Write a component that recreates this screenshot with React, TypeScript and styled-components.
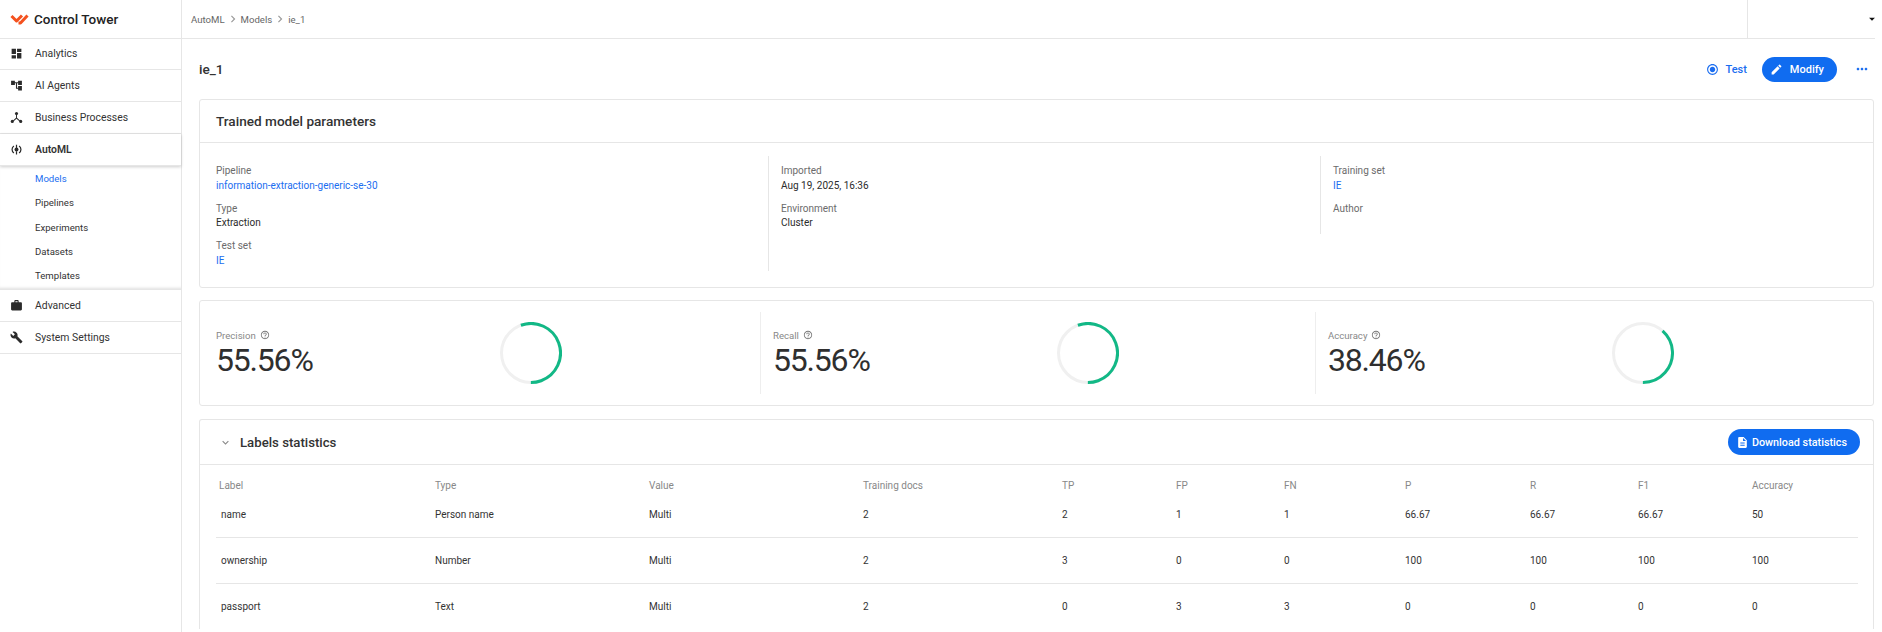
import React from 'react';
import styled, { createGlobalStyle } from 'styled-components';
import {
	MdDashboard,
	MdAccountTree,
	MdWork,
	MdBuild,
	MdEdit,
	MdDescription,
	MdMoreHoriz,
	MdRadioButtonChecked,
	MdHelpOutline,
	MdExpandMore,
	MdArrowDropDown,
	MdChevronRight,
} from 'react-icons/md';

const GlobalStyle = createGlobalStyle`
	html, body {
		margin: 0;
		padding: 0;
		background: #fff;
		font-family: Roboto, "Liberation Sans", sans-serif;
		color: #2b2b2b;
		overflow: hidden;
	}
`;

const ProcessIcon = () => (
	<svg width="13" height="13" viewBox="0 0 16 16" fill="#2b2b2b">
		<circle cx="8" cy="3.2" r="1.9" />
		<circle cx="2.8" cy="12.8" r="1.9" />
		<circle cx="13.2" cy="12.8" r="1.9" />
		<path d="M7.4 4h1.2v4.4l4 3.5-.8.9-3.8-3.3-3.8 3.3-.8-.9 4-3.5z" />
	</svg>
);

const AutoMLIcon = () => (
	<svg width="13" height="13" viewBox="0 0 16 16" fill="none" stroke="#2b2b2b">
		<path d="M4.8 3.6a5.4 5.4 0 0 0 0 8.8M11.2 3.6a5.4 5.4 0 0 1 0 8.8" strokeWidth="1.5" />
		<circle cx="8" cy="8" r="2.4" fill="#2b2b2b" stroke="none" />
		<path d="M8 2v4M8 10v4" strokeWidth="1.5" />
	</svg>
);

const Logo = () => (
	<svg width="19" height="12" viewBox="0 0 19 12">
		<path
			d="M1.5 3 L6.5 8 L12 2.5 M8.5 10 L10.5 10 L17.5 2.5"
			fill="none"
			stroke="#f4511e"
			strokeWidth="3"
			strokeLinejoin="round"
		/>
	</svg>
);

const Donut = ({ percent }: { percent: number }) => {
	const r = 29.5;
	const c = 2 * Math.PI * r;
	// the arc always ends at the bottom of the ring
	const rotate = 90 - percent * 3.6;
	return (
		<svg width="62" height="62" viewBox="0 0 62 62">
			<circle cx="31" cy="31" r={r} fill="none" stroke="#f0f0f0" strokeWidth="3" />
			<circle
				cx="31"
				cy="31"
				r={r}
				fill="none"
				stroke="#12b886"
				strokeWidth="3"
				strokeDasharray={`${(c * percent) / 100} ${c}`}
				transform={`rotate(${rotate} 31 31)`}
			/>
		</svg>
	);
};

const menuTop = [
	{ label: 'Analytics', icon: <MdDashboard size={13} /> },
	{ label: 'AI Agents', icon: <MdAccountTree size={13} /> },
	{ label: 'Business Processes', icon: <ProcessIcon /> },
];
const subMenu = ['Models', 'Pipelines', 'Experiments', 'Datasets', 'Templates'];

const metrics = [
	{ title: 'Precision', value: 55.56 },
	{ title: 'Recall', value: 55.56 },
	{ title: 'Accuracy', value: 38.46 },
];

const columns = ['Label', 'Type', 'Value', 'Training docs', 'TP', 'FP', 'FN', 'P', 'R', 'F1', 'Accuracy'];
const rows = [
	['name', 'Person name', 'Multi', '2', '2', '1', '1', '66.67', '66.67', '66.67', '50'],
	['ownership', 'Number', 'Multi', '2', '3', '0', '0', '100', '100', '100', '100'],
	['passport', 'Text', 'Multi', '2', '0', '3', '3', '0', '0', '0', '0'],
];

const App = () => {
	return (
		<Page>
			<GlobalStyle />
			<Sidebar>
				<Brand>
					<Logo />
					<BrandName>Control Tower</BrandName>
				</Brand>
				<MenuList>
					{menuTop.map((item) => (
						<MenuItem key={item.label}>
							<MenuIcon>{item.icon}</MenuIcon>
							{item.label}
						</MenuItem>
					))}
					<MenuItem $active>
						<MenuIcon>
							<AutoMLIcon />
						</MenuIcon>
						AutoML
					</MenuItem>
					<SubMenu>
						{subMenu.map((name, i) => (
							<SubItem key={name} $active={i === 0}>
								{name}
							</SubItem>
						))}
					</SubMenu>
					<MenuItem>
						<MenuIcon>
							<MdWork size={13} />
						</MenuIcon>
						Advanced
					</MenuItem>
					<MenuItem>
						<MenuIcon>
							<MdBuild size={13} />
						</MenuIcon>
						System Settings
					</MenuItem>
				</MenuList>
			</Sidebar>
			<Main>
				<Header>
					<Crumbs>
						AutoML
						<MdChevronRight size={14} />
						Models
						<MdChevronRight size={14} />
						ie_1
					</Crumbs>
					<UserBox>
						<MdArrowDropDown size={14} />
					</UserBox>
				</Header>
				<Content>
					<TitleRow>
						<PageTitle>ie_1</PageTitle>
						<Actions>
							<TextButton>
								<MdRadioButtonChecked size={13} />
								Test
							</TextButton>
							<PillButton>
								<MdEdit size={13} />
								Modify
							</PillButton>
							<MoreButton>
								<MdMoreHoriz size={16} />
							</MoreButton>
						</Actions>
					</TitleRow>
					<Card>
						<CardHeader>
							<CardTitle>Trained model parameters</CardTitle>
						</CardHeader>
						<ParamGrid>
							<ParamColumn>
								<Param>
									<ParamLabel>Pipeline</ParamLabel>
									<ParamLink>information-extraction-generic-se-30</ParamLink>
								</Param>
								<Param>
									<ParamLabel>Type</ParamLabel>
									<ParamValue>Extraction</ParamValue>
								</Param>
								<Param>
									<ParamLabel>Test set</ParamLabel>
									<ParamLink>IE</ParamLink>
								</Param>
							</ParamColumn>
							<ParamColumn $divided>
								<Param>
									<ParamLabel>Imported</ParamLabel>
									<ParamValue>Aug 19, 2025, 16:36</ParamValue>
								</Param>
								<Param>
									<ParamLabel>Environment</ParamLabel>
									<ParamValue>Cluster</ParamValue>
								</Param>
							</ParamColumn>
							<ParamColumn $divided $short>
								<Param>
									<ParamLabel>Training set</ParamLabel>
									<ParamLink>IE</ParamLink>
								</Param>
								<Param>
									<ParamLabel>Author</ParamLabel>
								</Param>
							</ParamColumn>
						</ParamGrid>
					</Card>
					<MetricsCard>
						{metrics.map((m, i) => (
							<Metric key={m.title} $divided={i > 0}>
								<MetricText>
									<MetricLabel>
										{m.title}
										<MdHelpOutline size={10} />
									</MetricLabel>
									<MetricValue>{m.value}%</MetricValue>
								</MetricText>
								<Donut percent={m.value} />
							</Metric>
						))}
					</MetricsCard>
					<TableCard>
						<TableHeader>
							<TableTitle>
								<MdExpandMore size={13} color="#888" />
								Labels statistics
							</TableTitle>
							<DownloadButton>
								<MdDescription size={13} />
								Download statistics
							</DownloadButton>
						</TableHeader>
						<TableWrap>
							<HeadRow>
								{columns.map((c) => (
									<HeadCell key={c}>{c}</HeadCell>
								))}
							</HeadRow>
							{rows.map((row, idx) => (
								<BodyRow key={row[0]} $last={idx === rows.length - 1}>
									{row.map((v, i) => (
										<BodyCell key={i}>{v}</BodyCell>
									))}
								</BodyRow>
							))}
						</TableWrap>
					</TableCard>
				</Content>
			</Main>
		</Page>
	);
};

const Page = styled.div`
	display: flex;
	width: 1875px;
	height: 632px;
	overflow: hidden;
	background: #fff;
`;

const Sidebar = styled.nav`
	width: 181px;
	flex: none;
	border-right: 1px solid #e6e6e6;
`;

const Brand = styled.div`
	height: 38px;
	display: flex;
	align-items: center;
	gap: 5px;
	padding-left: 10px;
	border-bottom: 1px solid #e6e6e6;
`;

const BrandName = styled.span`
	font-size: 13.5px;
	font-weight: 500;
	color: #222;
`;

const MenuList = styled.div`
	margin-top: -1px;
`;

const MenuItem = styled.div<{ $active?: boolean }>`
	height: 31px;
	display: flex;
	align-items: center;
	font-size: 10.4px;
	color: #333;
	font-weight: ${(props) => (props.$active ? 600 : 400)};
	border-bottom: 1px solid #e6e6e6;
	box-shadow: ${(props) => (props.$active ? '0 1px 3px rgba(0,0,0,0.2)' : 'none')};
`;

const MenuIcon = styled.span`
	width: 35px;
	flex: none;
	display: flex;
	justify-content: center;
	padding-right: 3px;
	box-sizing: border-box;
	color: #2b2b2b;
`;

const SubMenu = styled.div`
	height: 123px;
	border-bottom: 1px solid #e6e6e6;
	box-shadow: inset 0 -3px 3px -2px rgba(0, 0, 0, 0.12);
`;

const SubItem = styled.div<{ $active?: boolean }>`
	height: 24.25px;
	line-height: 25.5px;
	padding-left: 35px;
	font-size: 9.6px;
	color: ${(props) => (props.$active ? '#1a6df0' : '#333')};
`;

const Main = styled.main`
	flex: 1;
	min-width: 0;
`;

const Header = styled.header`
	height: 38px;
	display: flex;
	justify-content: space-between;
	border-bottom: 1px solid #e6e6e6;
`;

const Crumbs = styled.div`
	display: flex;
	align-items: center;
	gap: 1px;
	padding-left: 9px;
	font-size: 9.6px;
	color: #666;

	svg {
		color: #999;
	}
`;

const UserBox = styled.div`
	width: 127px;
	display: flex;
	align-items: center;
	justify-content: flex-end;
	border-left: 1px solid #e6e6e6;
	color: #111;

	svg {
		margin-right: -4px;
	}
`;

const Content = styled.div`
	padding: 0 1px 0 17px;
`;

const TitleRow = styled.div`
	height: 60px;
	display: flex;
	align-items: center;
	justify-content: space-between;
`;

const PageTitle = styled.h1`
	margin: 0;
	font-size: 13.6px;
	font-weight: 500;
	color: #333;
`;

const Actions = styled.div`
	display: flex;
	align-items: center;
`;

const TextButton = styled.button`
	display: flex;
	align-items: center;
	gap: 6.5px;
	border: 0;
	background: none;
	padding: 0;
	font: 500 11px Roboto, sans-serif;
	color: #1a6df0;
	margin-right: 15px;
`;

const PillButton = styled.button`
	height: 25px;
	display: flex;
	align-items: center;
	gap: 6.5px;
	padding: 0 13px 0 8.5px;
	border: 0;
	border-radius: 13px;
	background: #106cf0;
	color: #fff;
	font: 500 11px Roboto, sans-serif;
`;

const MoreButton = styled.span`
	display: flex;
	color: #1a6df0;
	margin: 0 4px 0 17px;
`;

const Card = styled.section`
	border: 1px solid #e6e6e6;
	border-radius: 3px;
	margin-bottom: 12px;
	height: 189px;
	box-sizing: border-box;
`;

const CardHeader = styled.div`
	height: 42px;
	display: flex;
	align-items: center;
	padding-left: 16px;
	border-bottom: 1px solid #e6e6e6;
`;

const CardTitle = styled.h2`
	margin: 0;
	font-size: 13.6px;
	font-weight: 500;
	color: #333;
`;

const ParamGrid = styled.div`
	display: grid;
	grid-template-columns: repeat(3, 552px);
	padding: 13px 0 0 16px;
	align-items: start;
`;

const ParamColumn = styled.div<{ $divided?: boolean; $short?: boolean }>`
	display: flex;
	flex-direction: column;
	gap: 7.5px;
	height: ${(props) => (props.$short ? '78px' : '115px')};
	padding-top: 7px;
	padding-left: ${(props) => (props.$divided ? '12px' : '0')};
	border-left: ${(props) => (props.$divided ? '1px solid #e6e6e6' : 'none')};
	box-sizing: border-box;
`;

const Param = styled.div`
	font-size: 10px;
	line-height: 14.5px;
	padding-top: 1px;
`;

const ParamLabel = styled.div`
	color: #6b6b6b;
`;

const ParamValue = styled.div`
	color: #2b2b2b;
`;

const ParamLink = styled.div`
	color: #1a6df0;
`;

const MetricsCard = styled.section`
	display: grid;
	grid-template-columns: 544px 555px 555px;
	height: 106px;
	align-items: center;
	padding-left: 16px;
	box-sizing: border-box;
	border: 1px solid #e6e6e6;
	border-radius: 3px;
	margin-bottom: 13px;
`;

const Metric = styled.div<{ $divided?: boolean }>`
	display: flex;
	align-items: center;
	height: 82px;
	padding-left: ${(props) => (props.$divided ? '12px' : '0')};
	border-left: ${(props) => (props.$divided ? '1px solid #eee' : 'none')};
`;

const MetricText = styled.div`
	width: 284px;
	flex: none;
	padding-top: 2px;
`;

const MetricLabel = styled.div`
	display: flex;
	align-items: center;
	gap: 4px;
	font-size: 9.6px;
	color: #888;

	svg {
		color: #777;
	}
`;

const MetricValue = styled.div`
	font-size: 32px;
	letter-spacing: -1.2px;
	line-height: 38px;
	color: #2f2f2f;
`;

const TableCard = styled.section`
	border: 1px solid #e6e6e6;
	border-bottom: 0;
	border-radius: 3px 3px 0 0;
`;

const TableHeader = styled.div`
	height: 44px;
	display: flex;
	align-items: center;
	justify-content: space-between;
	padding: 0 13px 0 19px;
	border-bottom: 1px solid #e6e6e6;
`;

const TableTitle = styled.h2`
	display: flex;
	align-items: center;
	gap: 8px;
	margin: 0;
	font-size: 13.2px;
	font-weight: 500;
	color: #333;
`;

const DownloadButton = styled(PillButton)`
	height: 26px;
	padding: 0 13px 0 8.5px;
	gap: 2.5px;
	font-size: 10.8px;
`;

const TableWrap = styled.div`
	padding: 0 15px 0 16px;
`;

const tableColumns = '216px 214px 214px 199px 114px 108px 121px 125px 108px 114px 1fr';

const HeadRow = styled.div`
	display: grid;
	grid-template-columns: ${tableColumns};
	height: 27px;
	align-items: end;
`;

const HeadCell = styled.div`
	font-size: 10px;
	color: #888;
	padding-left: 3px;
	line-height: 13px;
`;

const BodyRow = styled.div<{ $last?: boolean }>`
	display: grid;
	grid-template-columns: ${tableColumns};
	height: 45px;
	align-items: center;
	border-bottom: ${(props) => (props.$last ? '0' : '1px solid #e6e6e6')};
`;

const BodyCell = styled.div`
	font-size: 10px;
	color: #333;
	padding-left: 3px;

	&:first-child {
		padding-left: 5px;
	}
`;

export default App;
